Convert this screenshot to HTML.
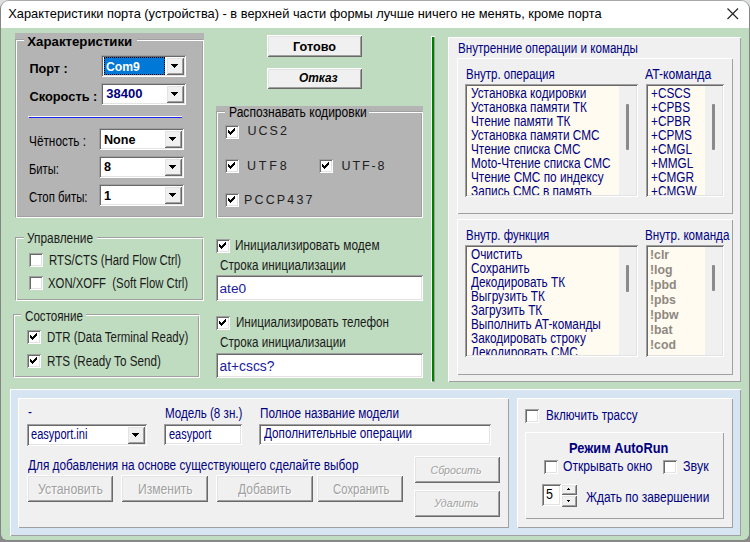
<!DOCTYPE html><html><head><meta charset="utf-8"><style>
html,body{margin:0;padding:0;}
body{width:750px;height:542px;overflow:hidden;position:relative;background:linear-gradient(#e0e0e0 0, #e0e0e0 270px, #8a8a8a 270px);font-family:"Liberation Sans", sans-serif;}
.t{position:absolute;white-space:pre;line-height:0;font-family:"Liberation Sans", sans-serif;}
.r{position:absolute;box-sizing:border-box;}
</style></head><body>
<div class="r" style="left:0px;top:0px;width:750px;height:541px;background:#c0dcc0;border:1px solid #858585;border-top-color:#a8a8a8;border-radius:9px 9px 7px 7px;"></div>
<div class="r" style="left:1px;top:1px;width:748px;height:27px;background:#fff;border-radius:8px 8px 0 0;"></div>
<div class="t" style="left:8.30px;top:14.00px;font-size:12.84px;color:#000;">Характеристики порта (устройства) - в верхней части формы лучше ничего не менять, кроме порта</div>
<svg class="r" style="left:727px;top:8px" width="12" height="12" viewBox="0 0 12 12"><path d="M0.5 0.5 L11 11 M11 0.5 L0.5 11" stroke="#262626" stroke-width="1.2"/></svg>
<div class="r" style="left:15px;top:33px;width:189px;height:185px;background:#b4b4b4;"></div>
<div class="r" style="left:15px;top:39px;width:188px;height:178px;border:1px solid #a0a0a0;"></div>
<div class="r" style="left:16px;top:40px;width:188px;height:178px;border:1px solid #ffffff; border-top-color:#fff;"></div>
<div class="r" style="left:24px;top:34px;width:113px;height:12px;background:#b4b4b4;"></div>
<div class="t" style="left:27.30px;top:41.50px;font-size:13.23px;color:#000;font-weight:bold;">Характеристики</div>
<div class="t" style="left:29.40px;top:69.00px;font-size:12.68px;color:#000;font-weight:bold;">Порт :</div>
<div class="t" style="left:29.40px;top:97.00px;font-size:12.83px;color:#000;font-weight:bold;">Скорость :</div>
<div class="r" style="left:101px;top:55px;width:85px;height:22px;background:#fff;box-shadow: inset 1px 1px 0 #a0a0a0, inset -1px -1px 0 #ffffff, inset 2px 2px 0 #696969, inset -2px -2px 0 #e3e3e3;"></div>
<div class="r" style="left:166px;top:57px;width:18px;height:18px;background:#f0f0f0;box-shadow: inset 1px 1px 0 #ffffff, inset -1px -1px 0 #696969, inset 2px 2px 0 #e3e3e3, inset -2px -2px 0 #a0a0a0;"></div>
<svg class="r" style="left:0;top:0" width="750" height="542" shape-rendering="crispEdges"><path d="M171 64h7v1h-7z M172 65h5v1h-5z M173 66h3v1h-3z M174 67h1v1h-1z" fill="#000"/></svg>
<div class="r" style="left:104px;top:57px;width:61px;height:18px;background:#0078d7;outline:1px dotted #000;outline-offset:-1px;"></div>
<div class="t" style="left:106.00px;top:66.80px;font-size:12.2px;color:#fff;font-weight:bold;">Com9</div>
<div class="r" style="left:101px;top:83px;width:85px;height:22px;background:#fff;box-shadow: inset 1px 1px 0 #a0a0a0, inset -1px -1px 0 #ffffff, inset 2px 2px 0 #696969, inset -2px -2px 0 #e3e3e3;"></div>
<div class="r" style="left:166px;top:85px;width:18px;height:18px;background:#f0f0f0;box-shadow: inset 1px 1px 0 #ffffff, inset -1px -1px 0 #696969, inset 2px 2px 0 #e3e3e3, inset -2px -2px 0 #a0a0a0;"></div>
<svg class="r" style="left:0;top:0" width="750" height="542" shape-rendering="crispEdges"><path d="M171 92h7v1h-7z M172 93h5v1h-5z M173 94h3v1h-3z M174 95h1v1h-1z" fill="#000"/></svg>
<div class="t" style="left:106.30px;top:94.40px;font-size:13.0px;color:#000080;font-weight:bold;">38400</div>
<div class="r" style="left:28px;top:116px;width:154px;height:1px;background:#fffff0;"></div>
<div class="r" style="left:29px;top:117px;width:153px;height:1px;background:#2020f0;"></div>
<div class="t" style="left:29.40px;top:141.00px;font-size:14.0px;color:#000;transform:scaleX(0.8443);transform-origin:0 0;">Чётность :</div>
<div class="r" style="left:99px;top:128px;width:85px;height:22px;background:#fff;box-shadow: inset 1px 1px 0 #a0a0a0, inset -1px -1px 0 #ffffff, inset 2px 2px 0 #696969, inset -2px -2px 0 #e3e3e3;"></div>
<div class="r" style="left:164px;top:130px;width:18px;height:18px;background:#f0f0f0;box-shadow: inset 1px 1px 0 #ffffff, inset -1px -1px 0 #696969, inset 2px 2px 0 #e3e3e3, inset -2px -2px 0 #a0a0a0;"></div>
<svg class="r" style="left:0;top:0" width="750" height="542" shape-rendering="crispEdges"><path d="M169 137h7v1h-7z M170 138h5v1h-5z M171 139h3v1h-3z M172 140h1v1h-1z" fill="#000"/></svg>
<div class="t" style="left:104.00px;top:139.70px;font-size:12.6px;color:#000;font-weight:bold;">None</div>
<div class="t" style="left:29.40px;top:169.00px;font-size:14.0px;color:#000;transform:scaleX(0.7971);transform-origin:0 0;">Биты:</div>
<div class="r" style="left:99px;top:156px;width:85px;height:22px;background:#fff;box-shadow: inset 1px 1px 0 #a0a0a0, inset -1px -1px 0 #ffffff, inset 2px 2px 0 #696969, inset -2px -2px 0 #e3e3e3;"></div>
<div class="r" style="left:164px;top:158px;width:18px;height:18px;background:#f0f0f0;box-shadow: inset 1px 1px 0 #ffffff, inset -1px -1px 0 #696969, inset 2px 2px 0 #e3e3e3, inset -2px -2px 0 #a0a0a0;"></div>
<svg class="r" style="left:0;top:0" width="750" height="542" shape-rendering="crispEdges"><path d="M169 165h7v1h-7z M170 166h5v1h-5z M171 167h3v1h-3z M172 168h1v1h-1z" fill="#000"/></svg>
<div class="t" style="left:104.00px;top:167.40px;font-size:12.6px;color:#000;font-weight:bold;">8</div>
<div class="t" style="left:29.40px;top:197.00px;font-size:14.0px;color:#000;transform:scaleX(0.8143);transform-origin:0 0;">Стоп биты:</div>
<div class="r" style="left:99px;top:184px;width:85px;height:22px;background:#fff;box-shadow: inset 1px 1px 0 #a0a0a0, inset -1px -1px 0 #ffffff, inset 2px 2px 0 #696969, inset -2px -2px 0 #e3e3e3;"></div>
<div class="r" style="left:164px;top:186px;width:18px;height:18px;background:#f0f0f0;box-shadow: inset 1px 1px 0 #ffffff, inset -1px -1px 0 #696969, inset 2px 2px 0 #e3e3e3, inset -2px -2px 0 #a0a0a0;"></div>
<svg class="r" style="left:0;top:0" width="750" height="542" shape-rendering="crispEdges"><path d="M169 193h7v1h-7z M170 194h5v1h-5z M171 195h3v1h-3z M172 196h1v1h-1z" fill="#000"/></svg>
<div class="t" style="left:104.00px;top:195.60px;font-size:12.6px;color:#000;font-weight:bold;">1</div>
<div class="r" style="left:267px;top:35px;width:95px;height:22px;background:#f0f0f0;box-shadow: inset 1px 1px 0 #ffffff, inset -1px -1px 0 #696969, inset 2px 2px 0 #e3e3e3, inset -2px -2px 0 #a0a0a0;"></div>
<div class="t" style="left:293.00px;top:47.00px;font-size:12.64px;color:#000;font-weight:bold;">Готово</div>
<div class="r" style="left:267px;top:68px;width:95px;height:21px;background:#f0f0f0;box-shadow: inset 1px 1px 0 #ffffff, inset -1px -1px 0 #696969, inset 2px 2px 0 #e3e3e3, inset -2px -2px 0 #a0a0a0;"></div>
<div class="t" style="left:299.00px;top:78.40px;font-size:11.9px;color:#000;font-weight:bold;font-style:italic;">Отказ</div>
<div class="r" style="left:216px;top:106px;width:207px;height:112px;background:#b4b4b4;"></div>
<div class="r" style="left:216px;top:111px;width:206px;height:106px;border:1px solid #a0a0a0;"></div>
<div class="r" style="left:217px;top:112px;width:206px;height:106px;border:1px solid #ffffff; border-top-color:#fff;"></div>
<div class="r" style="left:225px;top:107px;width:144px;height:10px;background:#b4b4b4;"></div>
<div class="t" style="left:229.00px;top:112.00px;font-size:14.0px;color:#000;transform:scaleX(0.8614);transform-origin:0 0;">Распознавать кодировки</div>
<div class="r" style="left:225px;top:125px;width:14px;height:14px;background:#fff;box-shadow: inset 1px 1px 0 #a0a0a0, inset -1px -1px 0 #ffffff, inset 2px 2px 0 #696969, inset -2px -2px 0 #e3e3e3;"></div>
<svg class="r" style="left:225px;top:125px" width="14" height="14" shape-rendering="crispEdges"><path d="M9 3h1v1h-1zM8 4h1v1h-1zM9 4h1v1h-1zM3 5h1v1h-1zM7 5h1v1h-1zM8 5h1v1h-1zM9 5h1v1h-1zM3 6h1v1h-1zM4 6h1v1h-1zM6 6h1v1h-1zM7 6h1v1h-1zM8 6h1v1h-1zM3 7h1v1h-1zM4 7h1v1h-1zM5 7h1v1h-1zM6 7h1v1h-1zM7 7h1v1h-1zM4 8h1v1h-1zM5 8h1v1h-1zM6 8h1v1h-1zM5 9h1v1h-1z" fill="#000"/></svg>
<div class="t" style="left:247.50px;top:131.00px;font-size:12.5px;color:#202020;letter-spacing:2.0px;">UCS2</div>
<div class="r" style="left:225px;top:159px;width:14px;height:14px;background:#fff;box-shadow: inset 1px 1px 0 #a0a0a0, inset -1px -1px 0 #ffffff, inset 2px 2px 0 #696969, inset -2px -2px 0 #e3e3e3;"></div>
<svg class="r" style="left:225px;top:159px" width="14" height="14" shape-rendering="crispEdges"><path d="M9 3h1v1h-1zM8 4h1v1h-1zM9 4h1v1h-1zM3 5h1v1h-1zM7 5h1v1h-1zM8 5h1v1h-1zM9 5h1v1h-1zM3 6h1v1h-1zM4 6h1v1h-1zM6 6h1v1h-1zM7 6h1v1h-1zM8 6h1v1h-1zM3 7h1v1h-1zM4 7h1v1h-1zM5 7h1v1h-1zM6 7h1v1h-1zM7 7h1v1h-1zM4 8h1v1h-1zM5 8h1v1h-1zM6 8h1v1h-1zM5 9h1v1h-1z" fill="#000"/></svg>
<div class="t" style="left:247.00px;top:165.70px;font-size:12.5px;color:#202020;letter-spacing:2.8px;">UTF8</div>
<div class="r" style="left:319px;top:159px;width:14px;height:14px;background:#fff;box-shadow: inset 1px 1px 0 #a0a0a0, inset -1px -1px 0 #ffffff, inset 2px 2px 0 #696969, inset -2px -2px 0 #e3e3e3;"></div>
<svg class="r" style="left:319px;top:159px" width="14" height="14" shape-rendering="crispEdges"><path d="M9 3h1v1h-1zM8 4h1v1h-1zM9 4h1v1h-1zM3 5h1v1h-1zM7 5h1v1h-1zM8 5h1v1h-1zM9 5h1v1h-1zM3 6h1v1h-1zM4 6h1v1h-1zM6 6h1v1h-1zM7 6h1v1h-1zM8 6h1v1h-1zM3 7h1v1h-1zM4 7h1v1h-1zM5 7h1v1h-1zM6 7h1v1h-1zM7 7h1v1h-1zM4 8h1v1h-1zM5 8h1v1h-1zM6 8h1v1h-1zM5 9h1v1h-1z" fill="#000"/></svg>
<div class="t" style="left:341.50px;top:165.70px;font-size:12.5px;color:#202020;letter-spacing:1.9px;">UTF-8</div>
<div class="r" style="left:225px;top:193px;width:14px;height:14px;background:#fff;box-shadow: inset 1px 1px 0 #a0a0a0, inset -1px -1px 0 #ffffff, inset 2px 2px 0 #696969, inset -2px -2px 0 #e3e3e3;"></div>
<svg class="r" style="left:225px;top:193px" width="14" height="14" shape-rendering="crispEdges"><path d="M9 3h1v1h-1zM8 4h1v1h-1zM9 4h1v1h-1zM3 5h1v1h-1zM7 5h1v1h-1zM8 5h1v1h-1zM9 5h1v1h-1zM3 6h1v1h-1zM4 6h1v1h-1zM6 6h1v1h-1zM7 6h1v1h-1zM8 6h1v1h-1zM3 7h1v1h-1zM4 7h1v1h-1zM5 7h1v1h-1zM6 7h1v1h-1zM7 7h1v1h-1zM4 8h1v1h-1zM5 8h1v1h-1zM6 8h1v1h-1zM5 9h1v1h-1z" fill="#000"/></svg>
<div class="t" style="left:244.00px;top:199.80px;font-size:12.5px;color:#202020;letter-spacing:2.15px;">PCCP437</div>
<div class="r" style="left:431px;top:36px;width:4px;height:346px;background:#008000;box-shadow: inset 1px 1px 0 #fff, inset -1px -1px 0 #a0a0a0;"></div>
<div class="r" style="left:448px;top:37px;width:293px;height:345px;background:#f0f0f0;box-shadow: inset 1px 1px 0 #fff, inset -1px -1px 0 #a0a0a0;"></div>
<div class="t" style="left:457.50px;top:48.00px;font-size:14.0px;color:#000080;transform:scaleX(0.8314);transform-origin:0 0;">Внутренние операции и команды</div>
<div class="r" style="left:457px;top:58px;width:276px;height:156px;background:#f0f0f0;box-shadow: inset 1px 1px 0 #fff, inset -1px -1px 0 #a0a0a0;"></div>
<div class="t" style="left:466.30px;top:74.00px;font-size:14.0px;color:#000080;transform:scaleX(0.8200);transform-origin:0 0;">Внутр. операция</div>
<div class="t" style="left:645.40px;top:74.00px;font-size:14.0px;color:#000080;transform:scaleX(0.8721);transform-origin:0 0;">AT-команда</div>
<div class="r" style="left:457px;top:219px;width:276px;height:156px;background:#f0f0f0;box-shadow: inset 1px 1px 0 #fff, inset -1px -1px 0 #a0a0a0;"></div>
<div class="t" style="left:466.00px;top:235.00px;font-size:14.0px;color:#000080;transform:scaleX(0.8186);transform-origin:0 0;">Внутр. функция</div>
<div class="t" style="left:644.70px;top:235.00px;font-size:14.0px;color:#000080;transform:scaleX(0.8336);transform-origin:0 0;">Внутр. команда</div>
<div class="r" style="left:465px;top:84px;width:173px;height:113px;overflow:hidden;background:#fffbf0;">
<div class="t" style="left:5.50px;top:9.00px;font-size:14.0px;color:#000080;transform:scaleX(0.8429);transform-origin:0 0;">Установка кодировки</div>
<div class="t" style="left:5.50px;top:23.00px;font-size:14.0px;color:#000080;transform:scaleX(0.8429);transform-origin:0 0;">Установка памяти ТК</div>
<div class="t" style="left:5.50px;top:37.00px;font-size:14.0px;color:#000080;transform:scaleX(0.8429);transform-origin:0 0;">Чтение памяти ТК</div>
<div class="t" style="left:5.50px;top:51.00px;font-size:14.0px;color:#000080;transform:scaleX(0.8429);transform-origin:0 0;">Установка памяти СМС</div>
<div class="t" style="left:5.50px;top:65.00px;font-size:14.0px;color:#000080;transform:scaleX(0.8429);transform-origin:0 0;">Чтение списка СМС</div>
<div class="t" style="left:5.50px;top:79.00px;font-size:14.0px;color:#000080;transform:scaleX(0.8429);transform-origin:0 0;">Moto-Чтение списка СМС</div>
<div class="t" style="left:5.50px;top:93.00px;font-size:14.0px;color:#000080;transform:scaleX(0.8429);transform-origin:0 0;">Чтение СМС по индексу</div>
<div class="t" style="left:5.50px;top:107.00px;font-size:14.0px;color:#000080;transform:scaleX(0.8429);transform-origin:0 0;">Запись СМС в память</div>
<div class="r" style="right:0;top:0;width:19px;height:113px;background:#f0f0f0;"></div>
<div class="r" style="right:9px;top:20px;width:3px;height:46px;background:#8a8a8a;border-radius:1px;"></div>
</div>
<div class="r" style="left:465px;top:84px;width:173px;height:113px;box-shadow: inset 1px 1px 0 #a0a0a0, inset -1px -1px 0 #ffffff, inset 2px 2px 0 #696969, inset -2px -2px 0 #e3e3e3;"></div>
<div class="r" style="left:646px;top:84px;width:78px;height:113px;overflow:hidden;background:#fffbf0;">
<div class="t" style="left:4.60px;top:9.00px;font-size:14.0px;color:#000080;transform:scaleX(0.8429);transform-origin:0 0;">+CSCS</div>
<div class="t" style="left:4.60px;top:23.00px;font-size:14.0px;color:#000080;transform:scaleX(0.8429);transform-origin:0 0;">+CPBS</div>
<div class="t" style="left:4.60px;top:37.00px;font-size:14.0px;color:#000080;transform:scaleX(0.8429);transform-origin:0 0;">+CPBR</div>
<div class="t" style="left:4.60px;top:51.00px;font-size:14.0px;color:#000080;transform:scaleX(0.8429);transform-origin:0 0;">+CPMS</div>
<div class="t" style="left:4.60px;top:65.00px;font-size:14.0px;color:#000080;transform:scaleX(0.8429);transform-origin:0 0;">+CMGL</div>
<div class="t" style="left:4.60px;top:79.00px;font-size:14.0px;color:#000080;transform:scaleX(0.8429);transform-origin:0 0;">+MMGL</div>
<div class="t" style="left:4.60px;top:93.00px;font-size:14.0px;color:#000080;transform:scaleX(0.8429);transform-origin:0 0;">+CMGR</div>
<div class="t" style="left:4.60px;top:107.00px;font-size:14.0px;color:#000080;transform:scaleX(0.8429);transform-origin:0 0;">+CMGW</div>
<div class="r" style="right:0;top:0;width:19px;height:113px;background:#f0f0f0;"></div>
<div class="r" style="right:9px;top:20px;width:3px;height:46px;background:#8a8a8a;border-radius:1px;"></div>
</div>
<div class="r" style="left:646px;top:84px;width:78px;height:113px;box-shadow: inset 1px 1px 0 #a0a0a0, inset -1px -1px 0 #ffffff, inset 2px 2px 0 #696969, inset -2px -2px 0 #e3e3e3;"></div>
<div class="r" style="left:465px;top:245px;width:173px;height:112px;overflow:hidden;background:#fffbf0;">
<div class="t" style="left:5.50px;top:9.00px;font-size:14.0px;color:#000080;transform:scaleX(0.8429);transform-origin:0 0;">Очистить</div>
<div class="t" style="left:5.50px;top:23.00px;font-size:14.0px;color:#000080;transform:scaleX(0.8429);transform-origin:0 0;">Сохранить</div>
<div class="t" style="left:5.50px;top:37.00px;font-size:14.0px;color:#000080;transform:scaleX(0.8429);transform-origin:0 0;">Декодировать ТК</div>
<div class="t" style="left:5.50px;top:51.00px;font-size:14.0px;color:#000080;transform:scaleX(0.8429);transform-origin:0 0;">Выгрузить ТК</div>
<div class="t" style="left:5.50px;top:65.00px;font-size:14.0px;color:#000080;transform:scaleX(0.8429);transform-origin:0 0;">Загрузить ТК</div>
<div class="t" style="left:5.50px;top:79.00px;font-size:14.0px;color:#000080;transform:scaleX(0.8429);transform-origin:0 0;">Выполнить AT-команды</div>
<div class="t" style="left:5.50px;top:93.00px;font-size:14.0px;color:#000080;transform:scaleX(0.8429);transform-origin:0 0;">Закодировать строку</div>
<div class="t" style="left:5.50px;top:107.00px;font-size:14.0px;color:#000080;transform:scaleX(0.8429);transform-origin:0 0;">Декодировать СМС</div>
<div class="r" style="right:0;top:0;width:19px;height:112px;background:#f0f0f0;"></div>
<div class="r" style="right:9px;top:20px;width:3px;height:27px;background:#8a8a8a;border-radius:1px;"></div>
</div>
<div class="r" style="left:465px;top:245px;width:173px;height:112px;box-shadow: inset 1px 1px 0 #a0a0a0, inset -1px -1px 0 #ffffff, inset 2px 2px 0 #696969, inset -2px -2px 0 #e3e3e3;"></div>
<div class="r" style="left:646px;top:245px;width:78px;height:112px;overflow:hidden;background:#fffbf0;">
<div class="t" style="left:4.00px;top:10.00px;font-size:12.3px;color:#8e8880;font-weight:bold;">!clr</div>
<div class="t" style="left:4.00px;top:25.00px;font-size:12.3px;color:#8e8880;font-weight:bold;">!log</div>
<div class="t" style="left:4.00px;top:40.00px;font-size:12.3px;color:#8e8880;font-weight:bold;">!pbd</div>
<div class="t" style="left:4.00px;top:55.00px;font-size:12.3px;color:#8e8880;font-weight:bold;">!pbs</div>
<div class="t" style="left:4.00px;top:70.00px;font-size:12.3px;color:#8e8880;font-weight:bold;">!pbw</div>
<div class="t" style="left:4.00px;top:85.00px;font-size:12.3px;color:#8e8880;font-weight:bold;">!bat</div>
<div class="t" style="left:4.00px;top:100.00px;font-size:12.3px;color:#8e8880;font-weight:bold;">!cod</div>
<div class="r" style="right:0;top:0;width:19px;height:112px;background:#f0f0f0;"></div>
<div class="r" style="right:9px;top:20px;width:3px;height:26px;background:#8a8a8a;border-radius:1px;"></div>
</div>
<div class="r" style="left:646px;top:245px;width:78px;height:112px;box-shadow: inset 1px 1px 0 #a0a0a0, inset -1px -1px 0 #ffffff, inset 2px 2px 0 #696969, inset -2px -2px 0 #e3e3e3;"></div>
<div class="r" style="left:15px;top:237px;width:188px;height:63px;border:1px solid #a0a0a0;"></div>
<div class="r" style="left:16px;top:238px;width:188px;height:63px;border:1px solid #ffffff; border-top-color:#fff;"></div>
<div class="r" style="left:24px;top:233px;width:73px;height:10px;background:#c0dcc0;"></div>
<div class="t" style="left:27.30px;top:238.00px;font-size:14.0px;color:#1a1a1a;transform:scaleX(0.8479);transform-origin:0 0;">Управление</div>
<div class="r" style="left:29px;top:253px;width:14px;height:14px;background:#fff;box-shadow: inset 1px 1px 0 #a0a0a0, inset -1px -1px 0 #ffffff, inset 2px 2px 0 #696969, inset -2px -2px 0 #e3e3e3;"></div>
<div class="t" style="left:48.70px;top:260.00px;font-size:14.0px;color:#1a1a1a;transform:scaleX(0.8136);transform-origin:0 0;">RTS/CTS (Hard Flow Ctrl)</div>
<div class="r" style="left:29px;top:276px;width:14px;height:14px;background:#fff;box-shadow: inset 1px 1px 0 #a0a0a0, inset -1px -1px 0 #ffffff, inset 2px 2px 0 #696969, inset -2px -2px 0 #e3e3e3;"></div>
<div class="t" style="left:47.60px;top:283.00px;font-size:14.0px;color:#1a1a1a;transform:scaleX(0.8107);transform-origin:0 0;">XON/XOFF  (Soft Flow Ctrl)</div>
<div class="r" style="left:13px;top:314px;width:186px;height:63px;border:1px solid #a0a0a0;"></div>
<div class="r" style="left:14px;top:315px;width:186px;height:63px;border:1px solid #ffffff; border-top-color:#fff;"></div>
<div class="r" style="left:21px;top:310px;width:65px;height:10px;background:#c0dcc0;"></div>
<div class="t" style="left:25.30px;top:316.00px;font-size:14.0px;color:#1a1a1a;transform:scaleX(0.8300);transform-origin:0 0;">Состояние</div>
<div class="r" style="left:27px;top:330px;width:14px;height:14px;background:#fff;box-shadow: inset 1px 1px 0 #a0a0a0, inset -1px -1px 0 #ffffff, inset 2px 2px 0 #696969, inset -2px -2px 0 #e3e3e3;"></div>
<svg class="r" style="left:27px;top:330px" width="14" height="14" shape-rendering="crispEdges"><path d="M9 3h1v1h-1zM8 4h1v1h-1zM9 4h1v1h-1zM3 5h1v1h-1zM7 5h1v1h-1zM8 5h1v1h-1zM9 5h1v1h-1zM3 6h1v1h-1zM4 6h1v1h-1zM6 6h1v1h-1zM7 6h1v1h-1zM8 6h1v1h-1zM3 7h1v1h-1zM4 7h1v1h-1zM5 7h1v1h-1zM6 7h1v1h-1zM7 7h1v1h-1zM4 8h1v1h-1zM5 8h1v1h-1zM6 8h1v1h-1zM5 9h1v1h-1z" fill="#000"/></svg>
<div class="t" style="left:46.50px;top:337.00px;font-size:14.0px;color:#1a1a1a;transform:scaleX(0.8193);transform-origin:0 0;">DTR (Data Terminal Ready)</div>
<div class="r" style="left:27px;top:354px;width:14px;height:14px;background:#fff;box-shadow: inset 1px 1px 0 #a0a0a0, inset -1px -1px 0 #ffffff, inset 2px 2px 0 #696969, inset -2px -2px 0 #e3e3e3;"></div>
<svg class="r" style="left:27px;top:354px" width="14" height="14" shape-rendering="crispEdges"><path d="M9 3h1v1h-1zM8 4h1v1h-1zM9 4h1v1h-1zM3 5h1v1h-1zM7 5h1v1h-1zM8 5h1v1h-1zM9 5h1v1h-1zM3 6h1v1h-1zM4 6h1v1h-1zM6 6h1v1h-1zM7 6h1v1h-1zM8 6h1v1h-1zM3 7h1v1h-1zM4 7h1v1h-1zM5 7h1v1h-1zM6 7h1v1h-1zM7 7h1v1h-1zM4 8h1v1h-1zM5 8h1v1h-1zM6 8h1v1h-1zM5 9h1v1h-1z" fill="#000"/></svg>
<div class="t" style="left:46.50px;top:361.00px;font-size:14.0px;color:#1a1a1a;transform:scaleX(0.8343);transform-origin:0 0;">RTS (Ready To Send)</div>
<div class="r" style="left:216px;top:239px;width:14px;height:14px;background:#fff;box-shadow: inset 1px 1px 0 #a0a0a0, inset -1px -1px 0 #ffffff, inset 2px 2px 0 #696969, inset -2px -2px 0 #e3e3e3;"></div>
<svg class="r" style="left:216px;top:239px" width="14" height="14" shape-rendering="crispEdges"><path d="M9 3h1v1h-1zM8 4h1v1h-1zM9 4h1v1h-1zM3 5h1v1h-1zM7 5h1v1h-1zM8 5h1v1h-1zM9 5h1v1h-1zM3 6h1v1h-1zM4 6h1v1h-1zM6 6h1v1h-1zM7 6h1v1h-1zM8 6h1v1h-1zM3 7h1v1h-1zM4 7h1v1h-1zM5 7h1v1h-1zM6 7h1v1h-1zM7 7h1v1h-1zM4 8h1v1h-1zM5 8h1v1h-1zM6 8h1v1h-1zM5 9h1v1h-1z" fill="#000"/></svg>
<div class="t" style="left:235.20px;top:245.00px;font-size:14.0px;color:#1a1a1a;transform:scaleX(0.8500);transform-origin:0 0;">Инициализировать модем</div>
<div class="t" style="left:219.80px;top:265.00px;font-size:14.0px;color:#1a1a1a;transform:scaleX(0.8329);transform-origin:0 0;">Строка инициализации</div>
<div class="r" style="left:216px;top:275px;width:207px;height:26px;background:#fff;box-shadow: inset 1px 1px 0 #a0a0a0, inset -1px -1px 0 #ffffff, inset 2px 2px 0 #696969, inset -2px -2px 0 #e3e3e3;"></div>
<div class="t" style="left:219.50px;top:288.80px;font-size:13.67px;color:#2020a0;">ate0</div>
<div class="r" style="left:216px;top:316px;width:14px;height:14px;background:#fff;box-shadow: inset 1px 1px 0 #a0a0a0, inset -1px -1px 0 #ffffff, inset 2px 2px 0 #696969, inset -2px -2px 0 #e3e3e3;"></div>
<svg class="r" style="left:216px;top:316px" width="14" height="14" shape-rendering="crispEdges"><path d="M9 3h1v1h-1zM8 4h1v1h-1zM9 4h1v1h-1zM3 5h1v1h-1zM7 5h1v1h-1zM8 5h1v1h-1zM9 5h1v1h-1zM3 6h1v1h-1zM4 6h1v1h-1zM6 6h1v1h-1zM7 6h1v1h-1zM8 6h1v1h-1zM3 7h1v1h-1zM4 7h1v1h-1zM5 7h1v1h-1zM6 7h1v1h-1zM7 7h1v1h-1zM4 8h1v1h-1zM5 8h1v1h-1zM6 8h1v1h-1zM5 9h1v1h-1z" fill="#000"/></svg>
<div class="t" style="left:236.30px;top:322.00px;font-size:14.0px;color:#1a1a1a;transform:scaleX(0.8314);transform-origin:0 0;">Инициализировать телефон</div>
<div class="t" style="left:219.80px;top:342.00px;font-size:14.0px;color:#1a1a1a;transform:scaleX(0.8329);transform-origin:0 0;">Строка инициализации</div>
<div class="r" style="left:216px;top:353px;width:207px;height:25px;background:#fff;box-shadow: inset 1px 1px 0 #a0a0a0, inset -1px -1px 0 #ffffff, inset 2px 2px 0 #696969, inset -2px -2px 0 #e3e3e3;"></div>
<div class="t" style="left:219.50px;top:365.80px;font-size:13.84px;color:#2020a0;">at+cscs?</div>
<div class="r" style="left:10px;top:389px;width:731px;height:147px;background:#d7e4f2;box-shadow: inset 1px 1px 0 #fff, inset -1px -1px 0 #a0a0a0;"></div>
<div class="r" style="left:18px;top:398px;width:491px;height:130px;background:#f0f0f0;box-shadow: inset 1px 1px 0 #fff, inset -1px -1px 0 #a0a0a0;"></div>
<div class="t" style="left:27.70px;top:412.00px;font-size:14.0px;color:#000080;transform:scaleX(0.8286);transform-origin:0 0;">-</div>
<div class="r" style="left:27px;top:424px;width:120px;height:22px;background:#fff;box-shadow: inset 1px 1px 0 #a0a0a0, inset -1px -1px 0 #ffffff, inset 2px 2px 0 #696969, inset -2px -2px 0 #e3e3e3;"></div>
<div class="r" style="left:127px;top:426px;width:18px;height:18px;background:#f0f0f0;box-shadow: inset 1px 1px 0 #ffffff, inset -1px -1px 0 #696969, inset 2px 2px 0 #e3e3e3, inset -2px -2px 0 #a0a0a0;"></div>
<svg class="r" style="left:0;top:0" width="750" height="542" shape-rendering="crispEdges"><path d="M132 433h7v1h-7z M133 434h5v1h-5z M134 435h3v1h-3z M135 436h1v1h-1z" fill="#000"/></svg>
<div class="t" style="left:30.80px;top:434.00px;font-size:14.0px;color:#000080;transform:scaleX(0.7879);transform-origin:0 0;">easyport.ini</div>
<div class="t" style="left:165.00px;top:413.00px;font-size:14.0px;color:#000080;transform:scaleX(0.8307);transform-origin:0 0;">Модель (8 зн.)</div>
<div class="r" style="left:164px;top:424px;width:78px;height:21px;background:#fff;box-shadow: inset 1px 1px 0 #a0a0a0, inset -1px -1px 0 #ffffff, inset 2px 2px 0 #696969, inset -2px -2px 0 #e3e3e3;"></div>
<div class="t" style="left:168.70px;top:434.00px;font-size:14.0px;color:#000080;transform:scaleX(0.7857);transform-origin:0 0;">easyport</div>
<div class="t" style="left:260.00px;top:413.00px;font-size:14.0px;color:#000080;transform:scaleX(0.8393);transform-origin:0 0;">Полное название модели</div>
<div class="r" style="left:259px;top:424px;width:232px;height:21px;background:#fff;box-shadow: inset 1px 1px 0 #a0a0a0, inset -1px -1px 0 #ffffff, inset 2px 2px 0 #696969, inset -2px -2px 0 #e3e3e3;"></div>
<div class="t" style="left:263.70px;top:433.00px;font-size:14.0px;color:#000080;transform:scaleX(0.8357);transform-origin:0 0;">Дополнительные операции</div>
<div class="t" style="left:27.80px;top:465.00px;font-size:14.0px;color:#000080;transform:scaleX(0.8443);transform-origin:0 0;">Для добавления на основе существующего сделайте выбор</div>
<div class="r" style="left:27px;top:475px;width:86px;height:27px;background:#f0f0f0;box-shadow: inset 1px 1px 0 #ffffff, inset -1px -1px 0 #696969, inset 2px 2px 0 #e3e3e3, inset -2px -2px 0 #a0a0a0;"></div>
<div class="t" style="left:37.70px;top:489.00px;font-size:14.0px;color:#a0a0a0;transform:scaleX(0.8821);transform-origin:0 0;text-shadow:1px 1px 0 #fff;">Установить</div>
<div class="r" style="left:121px;top:475px;width:87px;height:27px;background:#f0f0f0;box-shadow: inset 1px 1px 0 #ffffff, inset -1px -1px 0 #696969, inset 2px 2px 0 #e3e3e3, inset -2px -2px 0 #a0a0a0;"></div>
<div class="t" style="left:137.70px;top:489.00px;font-size:14.0px;color:#a0a0a0;transform:scaleX(0.8643);transform-origin:0 0;text-shadow:1px 1px 0 #fff;">Изменить</div>
<div class="r" style="left:216px;top:475px;width:97px;height:27px;background:#f0f0f0;box-shadow: inset 1px 1px 0 #ffffff, inset -1px -1px 0 #696969, inset 2px 2px 0 #e3e3e3, inset -2px -2px 0 #a0a0a0;"></div>
<div class="t" style="left:238.10px;top:489.00px;font-size:14.0px;color:#a0a0a0;transform:scaleX(0.8629);transform-origin:0 0;text-shadow:1px 1px 0 #fff;">Добавить</div>
<div class="r" style="left:317px;top:475px;width:86px;height:27px;background:#f0f0f0;box-shadow: inset 1px 1px 0 #ffffff, inset -1px -1px 0 #696969, inset 2px 2px 0 #e3e3e3, inset -2px -2px 0 #a0a0a0;"></div>
<div class="t" style="left:332.60px;top:489.00px;font-size:14.0px;color:#a0a0a0;transform:scaleX(0.8121);transform-origin:0 0;text-shadow:1px 1px 0 #fff;">Сохранить</div>
<div class="r" style="left:414px;top:456px;width:86px;height:27px;background:#f0f0f0;box-shadow: inset 1px 1px 0 #ffffff, inset -1px -1px 0 #696969, inset 2px 2px 0 #e3e3e3, inset -2px -2px 0 #a0a0a0;"></div>
<div class="t" style="left:430.50px;top:470.00px;font-size:10.6px;color:#a0a0a0;font-style:italic;text-shadow:1px 1px 0 #fff;">Сбросить</div>
<div class="r" style="left:414px;top:490px;width:86px;height:27px;background:#f0f0f0;box-shadow: inset 1px 1px 0 #ffffff, inset -1px -1px 0 #696969, inset 2px 2px 0 #e3e3e3, inset -2px -2px 0 #a0a0a0;"></div>
<div class="t" style="left:434.20px;top:503.00px;font-size:10.58px;color:#a0a0a0;font-style:italic;text-shadow:1px 1px 0 #fff;">Удалить</div>
<div class="r" style="left:517px;top:398px;width:216px;height:130px;background:#f0f0f0;box-shadow: inset 1px 1px 0 #fff, inset -1px -1px 0 #a0a0a0;"></div>
<div class="r" style="left:525px;top:409px;width:14px;height:14px;background:#fff;box-shadow: inset 1px 1px 0 #a0a0a0, inset -1px -1px 0 #ffffff, inset 2px 2px 0 #696969, inset -2px -2px 0 #e3e3e3;"></div>
<div class="t" style="left:545.70px;top:415.00px;font-size:14.0px;color:#000080;transform:scaleX(0.8350);transform-origin:0 0;">Включить трассу</div>
<div class="r" style="left:525px;top:432px;width:199px;height:87px;background:#f0f0f0;box-shadow: inset 1px 1px 0 #fff, inset -1px -1px 0 #a0a0a0;"></div>
<div class="t" style="left:569.00px;top:448.00px;font-size:14.0px;color:#000080;transform:scaleX(0.9157);transform-origin:0 0;font-weight:bold;">Режим AutoRun</div>
<div class="r" style="left:544px;top:460px;width:14px;height:14px;background:#fff;box-shadow: inset 1px 1px 0 #a0a0a0, inset -1px -1px 0 #ffffff, inset 2px 2px 0 #696969, inset -2px -2px 0 #e3e3e3;"></div>
<div class="t" style="left:563.30px;top:466.00px;font-size:14.0px;color:#000080;transform:scaleX(0.8671);transform-origin:0 0;">Открывать окно</div>
<div class="r" style="left:663px;top:460px;width:14px;height:14px;background:#fff;box-shadow: inset 1px 1px 0 #a0a0a0, inset -1px -1px 0 #ffffff, inset 2px 2px 0 #696969, inset -2px -2px 0 #e3e3e3;"></div>
<div class="t" style="left:682.70px;top:466.00px;font-size:14.0px;color:#000080;transform:scaleX(0.8914);transform-origin:0 0;">Звук</div>
<div class="r" style="left:542px;top:484px;width:19px;height:22px;background:#fff;box-shadow: inset 1px 1px 0 #a0a0a0, inset -1px -1px 0 #ffffff, inset 2px 2px 0 #696969, inset -2px -2px 0 #e3e3e3;"></div>
<div class="t" style="left:546.30px;top:493.60px;font-size:14.0px;color:#000;transform:scaleX(0.8929);transform-origin:0 0;">5</div>
<div class="r" style="left:561px;top:484px;width:16px;height:11px;background:#f0f0f0;box-shadow: inset 1px 1px 0 #ffffff, inset -1px -1px 0 #696969, inset 2px 2px 0 #e3e3e3, inset -2px -2px 0 #a0a0a0;"></div>
<div class="r" style="left:561px;top:495px;width:16px;height:12px;background:#f0f0f0;box-shadow: inset 1px 1px 0 #ffffff, inset -1px -1px 0 #696969, inset 2px 2px 0 #e3e3e3, inset -2px -2px 0 #a0a0a0;"></div>
<svg class="r" style="left:561px;top:484px" width="16" height="22" shape-rendering="crispEdges"><path d="M7 4h1v1h-1z M6 5h3v1h-3z M6 16h3v1h-3z M7 17h1v1h-1z" fill="#000"/></svg>
<div class="t" style="left:585.50px;top:497.00px;font-size:14.0px;color:#000080;transform:scaleX(0.8514);transform-origin:0 0;">Ждать по завершении</div>
</body></html>
